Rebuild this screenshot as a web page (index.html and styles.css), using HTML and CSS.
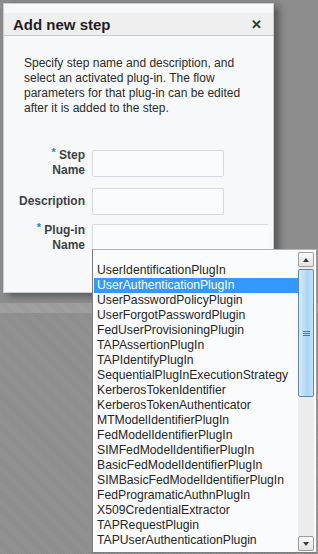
FILE: index.html
```html
<!DOCTYPE html>
<html lang="en">
  <head>
    <meta charset="UTF-8" />
    <meta name="viewport" content="width=device-width, initial-scale=1.0" />
    <title>Add new step</title>
    <link rel="stylesheet" href="styles.css">
  </head>
  <body>
    <!-- page behind the modal -->
    <div class="backdrop">
      <div class="page-top"></div>
      <div class="page-band"></div>
      <div class="page-rest"></div>
    </div>

    <section class="dialog">
      <header class="dlg-header">
        <h1 class="dlg-title">Add new step</h1>
        <span class="dlg-close">&#x2715;</span>
      </header>

      <div class="dlg-body">
        <p class="intro">
          Specify step name and description, and select an activated plug-in.
          The flow parameters for that plug-in can be edited after it is added
          to the step.
        </p>

        <div class="form">
          <div class="row row-name">
            <label class="lbl"><span class="req">*</span> Step<br />Name</label>
            <div class="field"></div>
          </div>
          <div class="row row-desc">
            <label class="lbl">Description</label>
            <div class="field"></div>
          </div>
          <div class="row row-plugin">
            <label class="lbl"><span class="req">*</span> Plug-in<br />Name</label>
            <div class="field wide"></div>
          </div>
        </div>
      </div>
    </section>

    <!-- open list of the plug-in combobox -->
    <div class="dropdown">
      <ul class="options">
        <li class="blank"></li>
        <li>UserIdentificationPlugIn</li>
        <li class="selected">UserAuthenticationPlugIn</li>
        <li>UserPasswordPolicyPlugin</li>
        <li>UserForgotPasswordPlugin</li>
        <li>FedUserProvisioningPlugin</li>
        <li>TAPAssertionPlugIn</li>
        <li>TAPIdentifyPlugIn</li>
        <li>SequentialPlugInExecutionStrategy</li>
        <li>KerberosTokenIdentifier</li>
        <li>KerberosTokenAuthenticator</li>
        <li>MTModelIdentifierPlugIn</li>
        <li>FedModelIdentifierPlugIn</li>
        <li>SIMFedModelIdentifierPlugIn</li>
        <li>BasicFedModelIdentifierPlugIn</li>
        <li>SIMBasicFedModelIdentifierPlugIn</li>
        <li>FedProgramaticAuthnPlugIn</li>
        <li>X509CredentialExtractor</li>
        <li>TAPRequestPlugin</li>
        <li>TAPUserAuthenticationPlugin</li>
      </ul>
      <div class="scrollbar">
        <div class="sb-btn up"><span class="arrow"></span></div>
        <div class="sb-track">
          <div class="sb-thumb"><span class="grip"></span></div>
        </div>
        <div class="sb-btn down"><span class="arrow"></span></div>
      </div>
    </div>
  </body>
</html>
```

FILE: styles.css
```css
:root {
  --text: #2b2b2b;
  --label: #3d424a;
  --req: #3a7cc6;
  --field-border: #d6dbe1;
  --select: #3399ff;
  --font: "Liberation Sans", Arial, sans-serif;
}

* {
  box-sizing: border-box;
}

html,
body {
  height: 100%;
  margin: 0;
  font-family: var(--font);
}

body {
  position: relative;
  overflow: hidden;
  background: #8e8e8e;
}

/* grey page under the modal */
.backdrop {
  display: flex;
  flex-direction: column;
  height: 100%;
}

.page-top {
  height: 303px;
  background: #8d8d8d;
}

.page-band {
  height: 10px;
  background: repeating-linear-gradient(
    45deg,
    #a2a2a2 0 1px,
    #9a9a9a 1px 2px
  );
}

.page-rest {
  flex: 1;
  background: repeating-linear-gradient(
    45deg,
    #929292 0 1px,
    #8c8c8c 1px 2px
  );
}

/* modal */
.dialog {
  position: absolute;
  left: 3px;
  top: 3px;
  width: 271px;
  height: 290px;
  padding-top: 9px;
  background: #f7f8f9;
  border: 1px solid #c9ced5;
  box-shadow: 5px 3px 8px rgba(0, 0, 0, 0.4);
  overflow: hidden;
}

.dlg-header {
  display: flex;
  align-items: center;
  justify-content: space-between;
  height: 23px;
  padding: 0 11px 0 9px;
  background: #efefef;
  border-bottom: 1px solid #c2ccd8;
}

.dlg-title {
  margin: 0;
  font-size: 15px;
  font-weight: 700;
  color: #1e1e1e;
}

.dlg-close {
  font-size: 13px;
  font-weight: 700;
  color: #333;
}

.dlg-body {
  padding: 20px 0 0 20px;
}

.intro {
  margin: 0;
  width: 232px;
  font-size: 12px;
  line-height: 15px;
  color: var(--text);
}

.form {
  margin-top: 32px;
  margin-left: -20px;
}

.row {
  display: flex;
  align-items: center;
  gap: 7px;
}

.row-desc {
  margin-top: 10px;
}

.row-plugin {
  margin-top: 8px;
}

.lbl {
  width: 81px;
  flex: none;
  text-align: right;
  font-size: 12px;
  font-weight: 700;
  line-height: 15px;
  color: var(--label);
}

.req {
  position: relative;
  top: -3px;
  font-size: 11px;
  color: var(--req);
}

.field {
  width: 132px;
  height: 27px;
  background: #fafbfd;
  border: 1px solid var(--field-border);
  border-radius: 2px;
}

.field.wide {
  width: 177px;
  height: 28px;
  border-right-color: transparent;
}

/* open list */
.dropdown {
  position: absolute;
  left: 92px;
  top: 249px;
  width: 225px;
  height: 304px;
  display: flex;
  background: #fafbfd;
  border: 1px solid #7d7d7d;
  border-top-color: #b4b4b4;
  border-right-color: #9a9a9a;
}

.options {
  flex: 1;
  margin: 0;
  padding: 0 0 0 1px;
  list-style: none;
  font-size: 12.2px;
  color: #262626;
}

.options li {
  height: 15px;
  line-height: 15px;
  padding-left: 3px;
  white-space: nowrap;
}

.options li.blank {
  height: 13px;
}

.options li.selected {
  background: var(--select);
  color: #fff;
}

.scrollbar {
  display: flex;
  flex-direction: column;
  width: 16px;
  margin: 2px 2px 1px 0;
  background: #ececec;
}

.sb-btn {
  display: flex;
  align-items: center;
  justify-content: center;
  height: 15px;
  background: linear-gradient(#fbfbfb, #e2e2e2);
  border: 1px solid #9c9c9c;
  border-radius: 2px;
}

.sb-btn .arrow {
  width: 0;
  height: 0;
  border-left: 3px solid transparent;
  border-right: 3px solid transparent;
}

.sb-btn.up .arrow {
  border-bottom: 4px solid #3a3a3a;
}

.sb-btn.down .arrow {
  border-top: 4px solid #3a3a3a;
}

.sb-track {
  flex: 1;
  padding-top: 2px;
}

.sb-thumb {
  display: flex;
  align-items: center;
  justify-content: center;
  height: 128px;
  background: linear-gradient(90deg, #d8ecfa, #a9d5f3 60%, #c3e2f7);
  border: 1px solid #5f86ad;
  border-radius: 2px;
}

.grip {
  width: 7px;
  height: 5px;
  border-top: 1px solid #4f7aa4;
  border-bottom: 1px solid #4f7aa4;
  background: linear-gradient(transparent 1px, #4f7aa4 1px 2px, transparent 2px);
}
```
